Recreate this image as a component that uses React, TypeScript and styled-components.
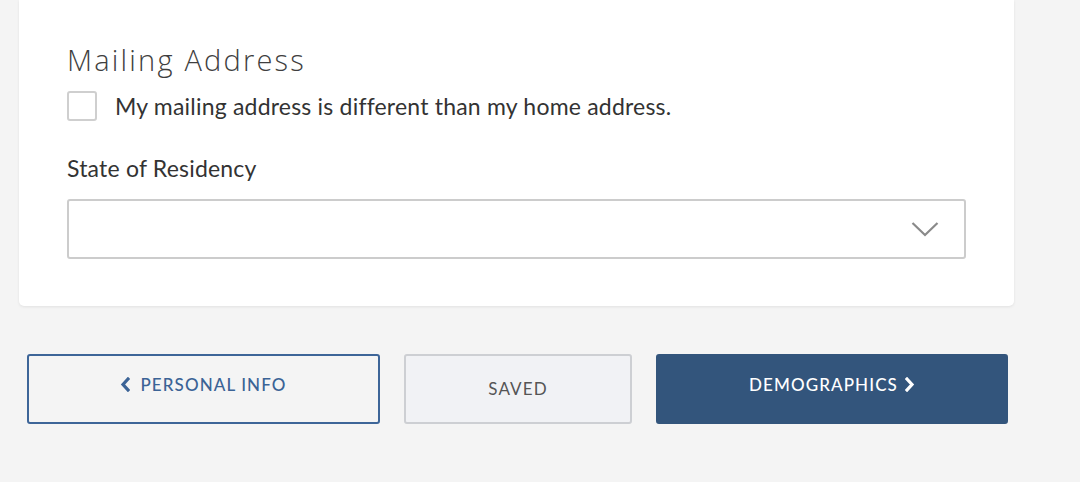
import React from "react";
import styled, { createGlobalStyle } from "styled-components";

const Global = createGlobalStyle`
  html, body { margin: 0; padding: 0; background: #f4f4f4; }
  body { font-family: "Lato", "Open Sans", sans-serif; }
  * { box-sizing: border-box; }
`;

const Page = styled.div`
  width: 1080px;
  height: 482px;
  background: #f4f4f4;
  padding: 0 66px 0 19px;
  overflow: hidden;
`;

const Card = styled.section`
  width: 995px;
  background: #ffffff;
  border-radius: 0 0 5px 5px;
  box-shadow: 0 1px 3px rgba(0, 0, 0, 0.08);
  padding: 40px 48px 47px 48px;
`;

const Heading = styled.h2`
  margin: 0;
  font-family: "Open Sans", sans-serif;
  font-weight: 300;
  font-size: 29px;
  line-height: 40px;
  color: #3f3f3f;
  letter-spacing: 2.2px;
`;

const CheckRow = styled.label`
  display: flex;
  align-items: center;
  gap: 18px;
  margin-top: 11px;
`;

const Box = styled.span`
  width: 30px;
  height: 30px;
  border: 2px solid #cfcfcf;
  border-radius: 3px;
  background: #fff;
  flex: none;
`;

const LabelText = styled.span`
  font-family: "Lato", sans-serif;
  font-size: 23px;
  letter-spacing: 0.2px;
  color: #333;
`;

const FieldLabel = styled.div`
  margin-top: 33px;
  font-family: "Lato", sans-serif;
  font-size: 23px;
  letter-spacing: 0.2px;
  color: #333;
  line-height: 28px;
`;

const Select = styled.div`
  margin-top: 17px;
  height: 60px;
  width: 899px;
  border: 2px solid #cccccc;
  border-radius: 3px;
  display: flex;
  align-items: center;
  justify-content: flex-end;
  padding-right: 25px;
`;

const Actions = styled.div`
  display: flex;
  gap: 24px;
  margin-top: 48px;
  padding-left: 8px;
`;

const Button = styled.button<{ $variant: "outline" | "muted" | "primary"; $w: number }>`
  width: ${(p) => p.$w}px;
  height: 70px;
  border-radius: 3px;
  font-family: "Lato", sans-serif;
  font-size: 17px;
  font-weight: ${(p) => (p.$variant === "muted" ? 400 : 500)};
  letter-spacing: 1.1px;
  text-transform: uppercase;
  display: flex;
  align-items: center;
  justify-content: center;
  gap: ${(p) => (p.$variant === "outline" ? 10 : 7)}px;
  cursor: pointer;
  padding: ${(p) => (p.$variant === "muted" ? "0 0 2px" : "0 0 10px")};
  border: 2px solid
    ${(p) => (p.$variant === "outline" ? "#3d6598" : p.$variant === "muted" ? "#cdcfd3" : "#33557c")};
  background: ${(p) => (p.$variant === "outline" ? "transparent" : p.$variant === "muted" ? "#f1f2f5" : "#33557c")};
  color: ${(p) => (p.$variant === "outline" ? "#3b6396" : p.$variant === "muted" ? "#555" : "#ffffff")};
`;

const Chevron = ({ dir, color }: { dir: "left" | "right"; color: string }) => (
  <svg width="10" height="15" viewBox="0 0 10 15">
    <polyline
      points={dir === "left" ? "8,2 3,7.5 8,13" : "2,2 7,7.5 2,13"}
      fill="none"
      stroke={color}
      strokeWidth="3.2"
      strokeLinecap="square"
    />
  </svg>
);

export default function App() {
  return (
    <Page>
      <Global />
      <Card>
        <Heading>Mailing Address</Heading>
        <CheckRow>
          <Box />
          <LabelText>My mailing address is different than my home address.</LabelText>
        </CheckRow>
        <FieldLabel>State of Residency</FieldLabel>
        <Select>
          <svg width="28" height="16" viewBox="0 0 28 16">
            <polyline points="1.5,2 14,14 26.5,2" fill="none" stroke="#8a8a8a" strokeWidth="2.2" />
          </svg>
        </Select>
      </Card>
      <Actions>
        <Button $variant="outline" $w={353}>
          <Chevron dir="left" color="#3b6396" />
          Personal Info
        </Button>
        <Button $variant="muted" $w={228}>
          Saved
        </Button>
        <Button $variant="primary" $w={352}>
          Demographics
          <Chevron dir="right" color="#ffffff" />
        </Button>
      </Actions>
    </Page>
  );
}
